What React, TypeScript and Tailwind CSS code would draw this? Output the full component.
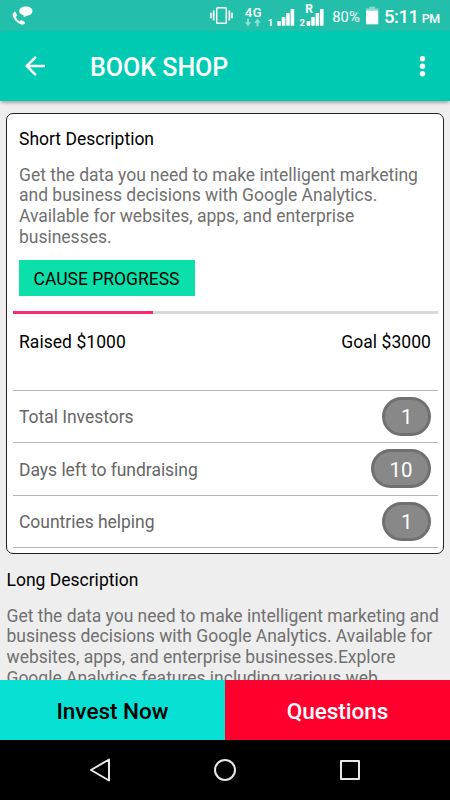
import { clsx } from "clsx";

const SHORT_DESCRIPTION = [
  "Get the data you need to make intelligent marketing",
  "and business decisions with Google Analytics.",
  "Available for websites, apps, and enterprise",
  "businesses.",
];

const LONG_DESCRIPTION = [
  "Get the data you need to make intelligent marketing and",
  "business decisions with Google Analytics. Available for",
  "websites, apps, and enterprise businesses.Explore",
  "Google Analytics features including various web",
];

const STATS = [
  { label: "Total Investors", value: 1 },
  { label: "Days left to fundraising", value: 10 },
  { label: "Countries helping", value: 1 },
];

const RAISED = 1000;
const GOAL = 3000;

function StatusBar() {
  return (
    <div className="h-[31px] shrink-0 bg-[#24bfaa]">
      <svg width="450" height="31" viewBox="0 0 450 31" fill="#fff" className="block">
        {/* call + message */}
        <path d="M14.3 12.2c-1.4.7-2 2.1-1.3 4.1 1.3 3.8 4.6 7 8.3 8.1 1.5.4 3-.1 3.7-1.5.2-.4 0-.8-.3-1l-3-1.7c-.4-.2-.8-.1-1.1.2l-1 1.1c-1.7-.9-3.1-2.5-3.8-4.4l1.1-1c.3-.3.4-.6.2-1l-1.8-3.3c-.2-.4-.6-.4-1 .4z" />
        <path d="M25.8 6.5c3.9 0 6.7 1.9 6.7 4.6s-2.6 4.6-6 4.7l-2.7 1.8-.2-2.3c-2.6-.6-4.4-2.2-4.4-4.2 0-2.7 2.8-4.6 6.6-4.6z" />

        {/* vibrate */}
        <rect x="216.700" y="7.700" width="9.600" height="15.600" rx=".8" fill="none" stroke="#fff" strokeWidth="1.500" />
        <path d="M212.800 10.500h1.700v10h-1.700zM210 12.700h1.700v5.600H210zM228.500 10.500h1.700v10h-1.700zM231.200 12.700h1.700v5.600h-1.700z" />

        {/* data arrows */}
        <path opacity=".5" d="M247 18.800h2v3.400h2.200L248 26.300l-3.200-4.100h2.200zM256.500 26.300h2v-3.600h2.200l-3.200-4.100-3.200 4.100h2.200z" />

        {/* signal 1 */}
        <rect x="277.300" y="21" width="3.600" height="4.700" rx=".6" />
        <rect x="281.800" y="17" width="3.600" height="8.700" rx=".6" />
        <rect x="286.200" y="13" width="3.600" height="12.700" rx=".6" />
        <rect x="290.600" y="9" width="3.600" height="16.700" rx=".6" />

        {/* signal 2 */}
        <rect x="306.700" y="21" width="3.600" height="4.700" rx=".6" />
        <rect x="311.200" y="17" width="3.600" height="8.700" rx=".6" />
        <rect x="315.600" y="13" width="3.600" height="12.700" rx=".6" />
        <rect x="320" y="9" width="3.600" height="16.700" rx=".6" />

        {/* battery */}
        <path opacity=".45" d="M366 8.500h3.300V6.700h5.700v1.800h3.300V11H366z" />
        <path d="M366 10.700h12.300v13.600H366z" />

        <g fontFamily="Roboto, sans-serif">
          <text x="244.700" y="16.500" fontSize="13" fontWeight="500" textLength="17" lengthAdjust="spacing">4G</text>
          <text x="267.700" y="25.500" fontSize="9.500" fontWeight="700">1</text>
          <text x="305.300" y="13.300" fontSize="12" fontWeight="700">R</text>
          <text x="299.500" y="25.500" fontSize="9.500" fontWeight="700">2</text>
          <text x="332.300" y="21.500" fontSize="15" textLength="27.500" lengthAdjust="spacingAndGlyphs">80%</text>
          <text x="384" y="22.700" fontSize="18.500" fontWeight="500" textLength="35" lengthAdjust="spacing">5:11</text>
          <text x="421.700" y="22.700" fontSize="12.500" fontWeight="500" textLength="18.500" lengthAdjust="spacing">PM</text>
        </g>
      </svg>
    </div>
  );
}

function Toolbar() {
  return (
    <header className="relative z-10 flex h-[70px] shrink-0 items-center bg-[#00cbb2] pr-[14px] pl-5 text-white shadow-[0_3px_3px_-1px_rgba(0,0,0,0.3)]">
      <button aria-label="Back">
        <svg width="30" height="30" viewBox="0 0 24 24" fill="currentColor">
          <path d="M20 11H7.830l5.590-5.590L12 4l-8 8 8 8 1.410-1.410L7.830 13H20v-2z" />
        </svg>
      </button>
      <h1 className="ml-[40px] flex-1 pt-[4px] text-[25px] leading-[30px] font-medium">BOOK SHOP</h1>
      <button aria-label="More options">
        <svg width="27" height="30" viewBox="0 0 27 30" fill="currentColor">
          <circle cx="13.500" cy="7.700" r="2.700" />
          <circle cx="13.500" cy="15.200" r="2.700" />
          <circle cx="13.500" cy="22.700" r="2.700" />
        </svg>
      </button>
    </header>
  );
}

function Paragraph({ lines, className }: { lines: string[]; className?: string }) {
  return (
    <p className={clsx("leading-[20.700px] tracking-[-0.014px] whitespace-nowrap text-[#707070]", className)}>
      {lines.map((line) => (
        <span key={line} className="block">
          {line}
        </span>
      ))}
    </p>
  );
}

function StatRow({ label, value }: { label: string; value: number }) {
  return (
    <div className="flex h-[52.500px] items-center justify-between border-b border-[#b5b5b5] px-[6.500px] text-[#666]">
      <span className="pt-[2px] tracking-[-0.03px]">{label}</span>
      <span className="flex h-[39px] min-w-[48.500px] items-center justify-center rounded-[20px] border-[3px] border-[#707070] bg-[#888] px-[15.500px] pt-[3px] text-[20.500px] text-white">
        {value}
      </span>
    </div>
  );
}

function CauseCard() {
  return (
    <section className="mx-[6px] mt-[12px] h-[441px] shrink-0 rounded-[7px] border border-[#222] bg-white px-[5.500px]">
      <h2 className="mt-[14.500px] pl-[6.500px] leading-[20.700px] text-black">Short Description</h2>
      <Paragraph lines={SHORT_DESCRIPTION} className="mt-[15.500px] pl-[6.500px]" />
      <button className="mt-[12.500px] ml-[6px] flex h-9 w-[176px] items-center justify-center bg-[#0be0ab] pt-[2px] text-black">
        CAUSE PROGRESS
      </button>
      <div className="mt-[15px] h-[3px] bg-[#d9d9d9]">
        <div className="h-full bg-[#f82b70]" style={{ width: `${Math.floor((RAISED / GOAL) * 100)}%` }} />
      </div>
      <div className="flex h-[76.500px] justify-between border-b border-[#b5b5b5] px-[6.500px] pt-[18px] leading-[20.700px] tracking-[0.05px] text-black">
        <span>Raised ${RAISED}</span>
        <span>Goal ${GOAL}</span>
      </div>
      {STATS.map((stat) => (
        <StatRow key={stat.label} {...stat} />
      ))}
    </section>
  );
}

function BottomActions() {
  return (
    <div className="relative z-10 grid h-[60px] shrink-0 grid-cols-2 text-[22.500px] font-medium">
      <button className="bg-[#06e1d3] pt-[3px] text-black">Invest Now</button>
      <button className="bg-[#ff002e] pt-[3px] text-white">Questions</button>
    </div>
  );
}

function NavigationBar() {
  return (
    <nav className="h-[60px] shrink-0 bg-black">
      <svg width="450" height="60" viewBox="0 0 450 60" fill="none" stroke="#e8e8e8" strokeWidth="2" strokeLinejoin="round">
        <path d="M109 19.500v21L91 30z" />
        <circle cx="225" cy="30" r="10" />
        <rect x="341" y="21" width="18" height="18" />
      </svg>
    </nav>
  );
}

export default function App() {
  return (
    <div className="flex h-[800px] w-[450px] flex-col overflow-hidden bg-[#eee] font-[Roboto,sans-serif] text-[17.500px]">
      <StatusBar />
      <Toolbar />
      <main className="flex min-h-0 flex-1 flex-col">
        <CauseCard />
        <h2 className="mt-[15.500px] pl-[6.500px] leading-[20.700px] text-black">Long Description</h2>
        <Paragraph lines={LONG_DESCRIPTION} className="mt-[15.500px] pl-[6.500px]" />
      </main>
      <BottomActions />
      <NavigationBar />
    </div>
  );
}
